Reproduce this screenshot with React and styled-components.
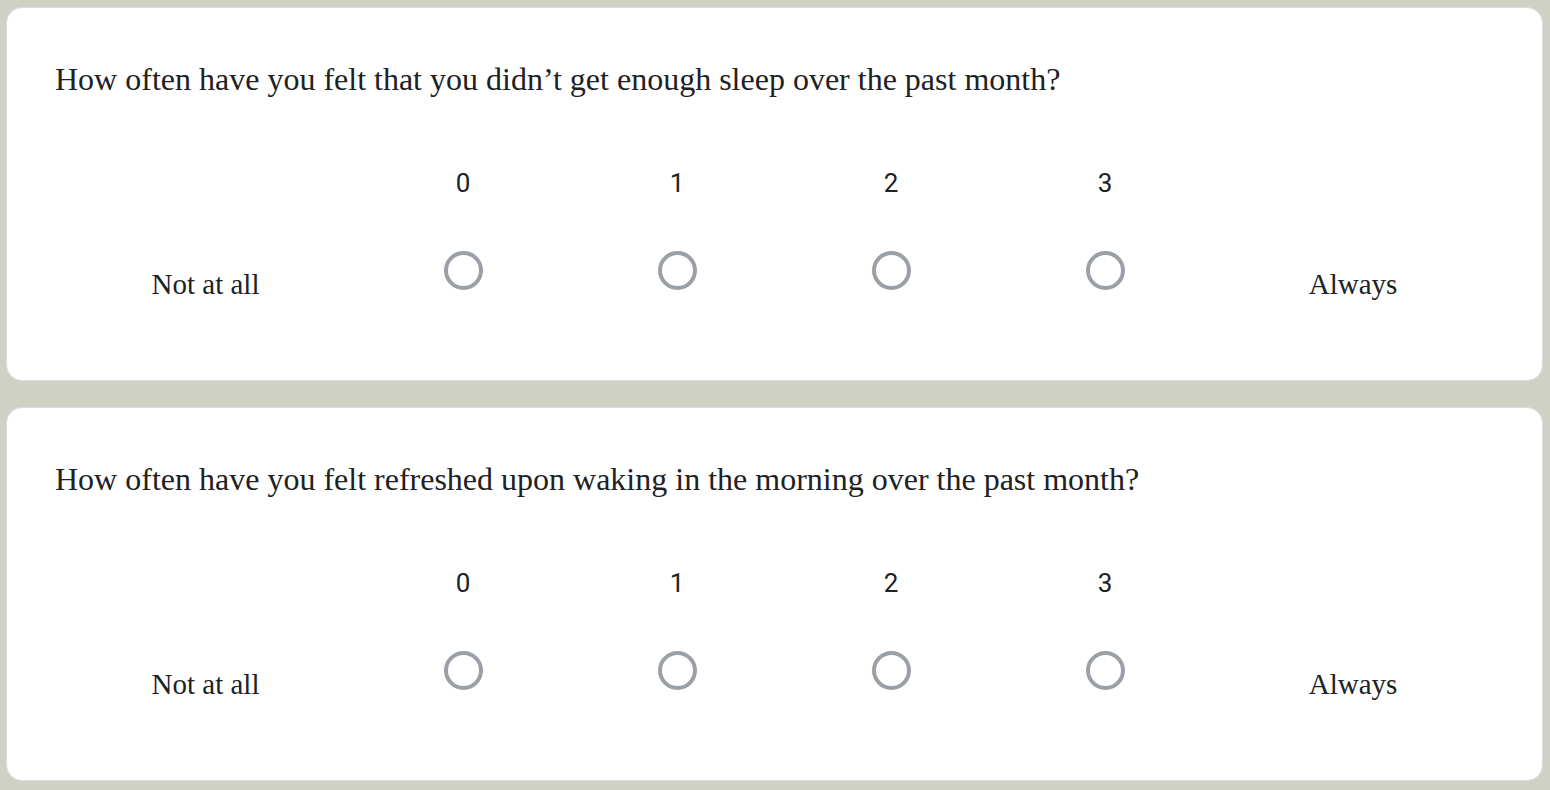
import styled, { createGlobalStyle } from 'styled-components';

const GlobalStyle = createGlobalStyle`
  html, body {
    margin: 0;
    background: #cfd1c5;
  }
  body {
    padding: 7px 7px 0 6px;
    font-family: "Liberation Serif", "Times New Roman", serif;
    color: #202124;
  }
`;

const Page = styled.div`
  display: flex;
  flex-direction: column;
  gap: 26px;
`;

const Card = styled.section`
  background: #fff;
  border: 1px solid #dadce0;
  border-radius: 16px;
  padding: 53px 48px 79px 48px;
`;

const Question = styled.div`
  font-size: 32px;
  line-height: 37px;
  margin-bottom: 69px;
`;

const Scale = styled.div`
  display: flex;
  align-items: flex-start;
`;

const EndLabel = styled.div`
  width: ${(props) => props.width}px;
  flex: none;
  margin-top: 100px;
  text-align: center;
  font-size: 29px;
  line-height: 34px;
`;

const Option = styled.label`
  width: 214px;
  display: flex;
  flex-direction: column;
  align-items: center;
  cursor: pointer;
`;

const Number = styled.span`
  font-family: Roboto, "Liberation Sans", sans-serif;
  font-size: 26px;
  line-height: 32px;
  color: #202124;
`;

const Radio = styled.span`
  margin-top: 52px;
  width: 39px;
  height: 39px;
  box-sizing: border-box;
  border: 4px solid #9aa0a6;
  border-radius: 50%;
`;

const questions = [
  'How often have you felt that you didn’t get enough sleep over the past month?',
  'How often have you felt refreshed upon waking in the morning over the past month?',
];

const ScaleQuestion = ({ text }) => (
  <Card>
    <Question>{text}</Question>
    <Scale>
      <EndLabel width={301}>Not at all</EndLabel>
      {[0, 1, 2, 3].map((n) => (
        <Option key={n}>
          <Number>{n}</Number>
          <Radio />
        </Option>
      ))}
      <EndLabel width={282}>Always</EndLabel>
    </Scale>
  </Card>
);

export default function App() {
  return (
    <>
      <GlobalStyle />
      <Page>
        {questions.map((q) => (
          <ScaleQuestion key={q} text={q} />
        ))}
      </Page>
    </>
  );
}
